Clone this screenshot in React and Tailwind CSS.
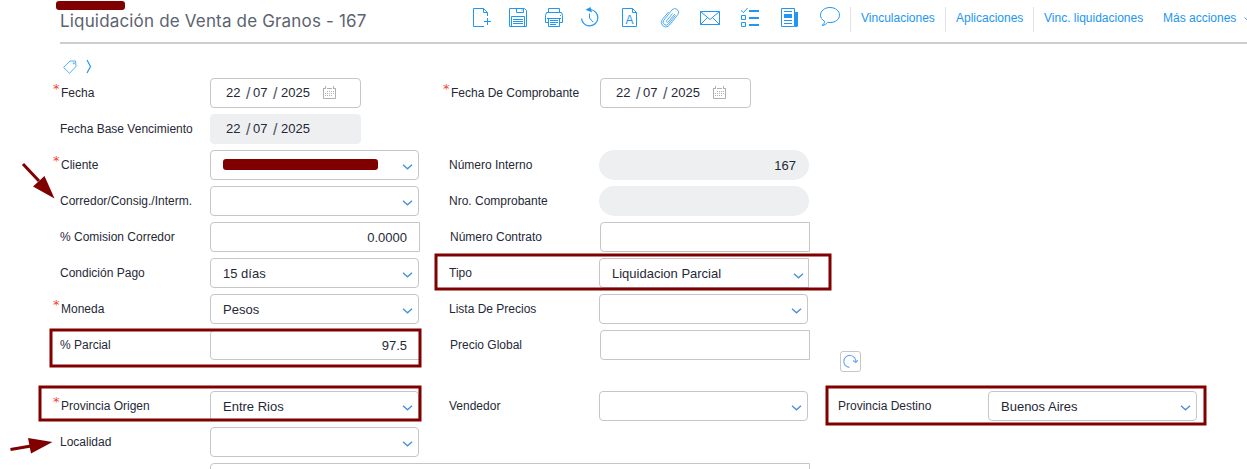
import React from 'react';
import clsx from 'clsx';

function ToolIcon({ children }) {
  return (
    <svg className="h-[21px] w-5 shrink-0 text-[#2196f3]" viewBox="0 0 20 21" fill="none" stroke="currentColor" strokeWidth="1">
      {children}
    </svg>
  );
}

function Toolbar() {
  return (
    <div className="flex items-start pt-[7px]">
      <div className="flex gap-4">
        <ToolIcon>
          <path d="M12 19.5H1.500v-18h10l4 4V9M11.500 1.500v4h4M15.500 11v7M12 14.500h7" />
        </ToolIcon>
        <ToolIcon>
          <path d="M1.500 1.500h15l2 2v16h-17zM8.500 1.500v4h7v-4M3.500 19.500v-10h13v10M5 12.500h10M5 14.500h10M5 16.500h10M13.500 3h1" />
        </ToolIcon>
        <ToolIcon>
          <path d="M4.500 5.500v-4h11v4M4.500 15.500h-3v-7l1-3h15l1 3v7h-3M3 11.500h14M4.500 11.500v8h11v-8M6 13.500h8M6 15.500h8M6 17.500h6M16 8.500h1" />
        </ToolIcon>
        <ToolIcon>
          <path d="M10.500 2.500a8.200 8.200 0 1 1-9 9" strokeWidth="1.200" />
          <path d="M9.500 6.500v4.500l3.500 4" />
          <path d="M5.500 2.700L10.500 0l1.500 5.500z" fill="currentColor" stroke="none" />
        </ToolIcon>
      </div>
      <div className="ml-5 flex gap-5">
        <ToolIcon>
          <path d="M2.500 1.500h10l4 4v14h-14zM12.500 1.500v4h4" />
          <text x="9.500" y="17" textAnchor="middle" fill="currentColor" stroke="none" className="font-['Liberation_Sans',sans-serif] text-[12px]">A</text>
        </ToolIcon>
        <ToolIcon>
          <path d="M15.500 8.300L8.600 16.900a3 3 0 0 1-4.800-3.600L12 2.800a3.800 3.800 0 0 1 5.800 4.900L9.600 18a4.700 4.700 0 0 1-6.900.700 4.800 4.800 0 0 1-.300-6.300L8.500 5M12.500 6.500l-5.800 7.200a1 1 0 0 0 1.600 1.300l6.500-8" strokeWidth="0.8" />
        </ToolIcon>
        <ToolIcon>
          <path d="M.5 4.500h19v13H.5zM.5 4.500l9.500 8 9.500-8M.5 17.500l7-7M19.500 17.500l-7-7" />
        </ToolIcon>
        <ToolIcon>
          <path d="M1 3.500l2.500 2L7.500 1M1.500 8.500h4v4h-4zM1.500 15.500h4v4h-4z" />
          <path d="M9 4h10M9 11h10M9 18h10" strokeWidth="2" />
        </ToolIcon>
        <ToolIcon>
          <path d="M1.500 1.500h13v18h-13zM4 4.500h8M4 13.500h8M4 16.500h8" />
          <path d="M4 7h8v4H4zM15 5h3v14l-1 1h-2z" fill="currentColor" stroke="none" />
        </ToolIcon>
        <ToolIcon>
          <path d="M4.500 14.200C1.800 12.700.5 10.600.5 8.300.5 4 4.500.5 10 .5S19.500 4 19.500 8.200 15.500 15.500 10 15.500c-1 0-1.500 0-2.200-.2-1.300 1.700-3.300 2.900-5.800 3.200 1.700-1 2.500-2.300 2.500-4.300z" />
        </ToolIcon>
      </div>
      <nav className="ml-[10px] flex h-[25px] text-xs leading-[22px] whitespace-nowrap text-[#2196f3]">
        <span className="w-[95px] border-l border-[#e2e2e4] pl-[10px]">Vinculaciones</span>
        <span className="w-[88px] border-l border-[#e2e2e4] pl-[10px]">Aplicaciones</span>
        <span className="w-[130px] border-l border-[#e2e2e4] pl-[10px]">Vinc. liquidaciones</span>
        <span className="w-[81px]">Más acciones</span>
        <Chevron className="mt-[10px] h-1 w-[7px] shrink-0" />
      </nav>
    </div>
  );
}

function Chevron({ className }) {
  return (
    <svg className={className} viewBox="0 0 10 6" fill="none" stroke="#4a90d9" strokeWidth="1.4">
      <path d="M.5 .8L5 4.800 9.500 .8" />
    </svg>
  );
}

function Label({ required, children }) {
  return (
    <span className={clsx('relative w-[150px] shrink-0 pb-px text-xs whitespace-nowrap', required && 'pl-px')}>
      {required && (
        <span className="absolute -top-[4px] -left-[7px] font-['DejaVu_Sans',sans-serif] text-[13px] leading-[15px] text-[#f44336]">*</span>
      )}
      {children}
    </span>
  );
}

function Field({ label, required, shift, children }) {
  return (
    <div className={clsx('flex h-[30px] w-[389px] shrink-0 items-center', shift && 'pl-px')}>
      {label && <Label required={required}>{label}</Label>}
      {children}
    </div>
  );
}

function Select({ value, square, children }) {
  return (
    <div
      className={clsx(
        'flex h-[30px] shrink-0 items-center border border-[#c6c6c8] bg-white pl-3 text-[13px]',
        square ? 'w-[210px] rounded-l-[4px] pr-1' : 'w-[209px] rounded-[4px] pr-[5px]'
      )}
    >
      <span className="grow pt-px">{value}</span>
      {children}
      <Chevron className={clsx('h-[6px] w-[11px] shrink-0', square ? 'mt-[5px]' : 'mt-[4px]')} />
    </div>
  );
}

function NumberBox({ value }) {
  return (
    <div className="h-[30px] w-[210px] shrink-0 rounded-l-[4px] border border-[#c6c6c8] bg-white pr-3 text-right text-[13px] leading-[29px]">
      {value}
    </div>
  );
}

function ReadOnly({ value }) {
  return (
    <div className="h-[30px] w-[210px] shrink-0 rounded-full bg-[#eeeff1] pr-[13px] text-right text-[13px] leading-[31px]">{value}</div>
  );
}

function DateBox({ disabled }) {
  return (
    <div
      className={clsx(
        'flex h-[30px] w-[151px] shrink-0 items-center rounded-[4px] border pl-[15px] text-[13px]',
        disabled ? 'border-[#eeeff1] bg-[#eeeff1]' : 'border-[#c6c6c8] bg-white'
      )}
    >
      <span className="w-5">22</span>
      <span className="w-[7px] pt-px text-base leading-none font-light text-[#4b5563]">/</span>
      <span className="w-5">07</span>
      <span className="w-2 pt-px text-base leading-none text-[#4b5563]">/</span>
      <span className="w-[42px]">2025</span>
      {!disabled && (
        <svg className="-mt-px h-[13px] w-[13px]" viewBox="0 0 13 13" fill="none" stroke="#b0b0b0">
          <path d="M.5 2v10.500h12V2M0 2.500h2M4 2.500h5M11 2.500h2M2.500 0v3M10.500 0v3" />
          <path d="M4 5.500h8M2 7.500h10M2 9.500h8" strokeDasharray="1 1" />
        </svg>
      )}
    </div>
  );
}

function Row({ children }) {
  return <div className="flex h-[30px]">{children}</div>;
}

// Hand-made marks placed over the form
function Annotations() {
  return (
    <svg className="pointer-events-none absolute inset-0 h-[469px] w-[1247px]" viewBox="0 0 1247 469" fill="none" stroke="#800000" strokeWidth="3">
      <rect x="436" y="255" width="394" height="34" />
      <rect x="51" y="330" width="369" height="36" />
      <rect x="40" y="387" width="380" height="33" />
      <rect x="827" y="387" width="378" height="37" />
      <path d="M23 164l16 17M10.500 449.500L31 446" />
      <path d="M54.500 198.500L33 186.500l11.500-10.500zM52.500 442L28 438l3 15.500z" fill="#800000" stroke="none" />
    </svg>
  );
}

export default function App() {
  return (
    <div className="relative h-[469px] w-[1247px] overflow-hidden bg-white font-['Liberation_Sans',sans-serif] text-[#1f2937]">
      <header className="ml-[60px] flex h-11 border-b-2 border-[#cdcdd1]">
        <div className="relative w-[412px] shrink-0">
          <span className="absolute top-px -left-1 h-[9px] w-[69px] rounded-[3px] bg-[#800000]" />
          <h1 className="pt-[10px] font-['Inter',sans-serif] text-[17px] leading-[22px] tracking-[0.17px] whitespace-nowrap text-[#5c6370]">
            Liquidación de Venta de Granos - 167
          </h1>
        </div>
        <Toolbar />
      </header>

      <div className="ml-[60px] flex h-[34px] items-start pt-[15px] pl-[3px]">
        <svg className="mt-px h-[14px] w-[14px]" viewBox="0 0 14 14" fill="none" stroke="#42a5f5" strokeWidth="0.9">
          <path d="M7 1L12.500 1 13 6.500 6.500 13.300.6 7.500z" />
          <circle cx="10.800" cy="3.200" r=".6" />
        </svg>
        <svg className="ml-[9px] h-[15px] w-[6px]" viewBox="0 0 6 15" fill="none" stroke="#2196f3" strokeWidth="1.200">
          <path d="M1 1l3.500 6.500L1 14" />
        </svg>
      </div>

      <main className="ml-[60px] flex w-[1187px] flex-col gap-[6px]">
        <Row>
          <Field label="Fecha" required><DateBox /></Field>
          <Field label="Fecha De Comprobante" required shift><DateBox /></Field>
        </Row>
        <Row>
          <Field label="Fecha Base Vencimiento"><DateBox disabled /></Field>
        </Row>
        <Row>
          <Field label="Cliente" required>
            <div className="relative">
              <Select />
              <span className="absolute top-[9px] left-[13px] h-[11px] w-[155px] rounded-[3px] bg-[#800000]" />
            </div>
          </Field>
          <Field label="Número Interno"><ReadOnly value="167" /></Field>
        </Row>
        <Row>
          <Field label="Corredor/Consig./Interm."><Select /></Field>
          <Field label="Nro. Comprobante"><ReadOnly /></Field>
        </Row>
        <Row>
          <Field label="% Comision Corredor"><NumberBox value="0.0000" /></Field>
          <Field label="Número Contrato" shift><NumberBox /></Field>
        </Row>
        <Row>
          <Field label="Condición Pago"><Select value="15 días" /></Field>
          <Field label="Tipo"><Select value="Liquidacion Parcial" square /></Field>
        </Row>
        <Row>
          <Field label="Moneda" required><Select value="Pesos" /></Field>
          <Field label="Lista De Precios"><Select /></Field>
        </Row>
        <Row>
          <Field label="% Parcial"><NumberBox value="97.5" /></Field>
          <Field label="Precio Global" shift><NumberBox /></Field>
          <button className="mt-[21px] ml-[2px] flex h-[21px] w-[21px] items-center justify-center rounded-[3px] border border-[#c6c6c8]">
            <svg className="h-[15px] w-[15px]" viewBox="0 0 15 15" fill="none" stroke="#64a8f5" strokeWidth="1.100">
              <path d="M6.500 13.400A6 6 0 1 1 12.800 8M10 6.500l2.800 2 2-2.500" />
            </svg>
          </button>
        </Row>
        <div className="mt-[25px] flex h-[30px]">
          <Field label="Provincia Origen" required><Select value="Entre Rios" /></Field>
          <Field label="Vendedor"><Select /></Field>
          <Field label="Provincia Destino"><Select value="Buenos Aires" /></Field>
        </div>
        <Row>
          <Field label="Localidad"><Select /></Field>
        </Row>
        <div className="ml-[150px] h-[30px] w-[600px] rounded-l-[4px] border border-[#c6c6c8]" />
      </main>

      <Annotations />
    </div>
  );
}
